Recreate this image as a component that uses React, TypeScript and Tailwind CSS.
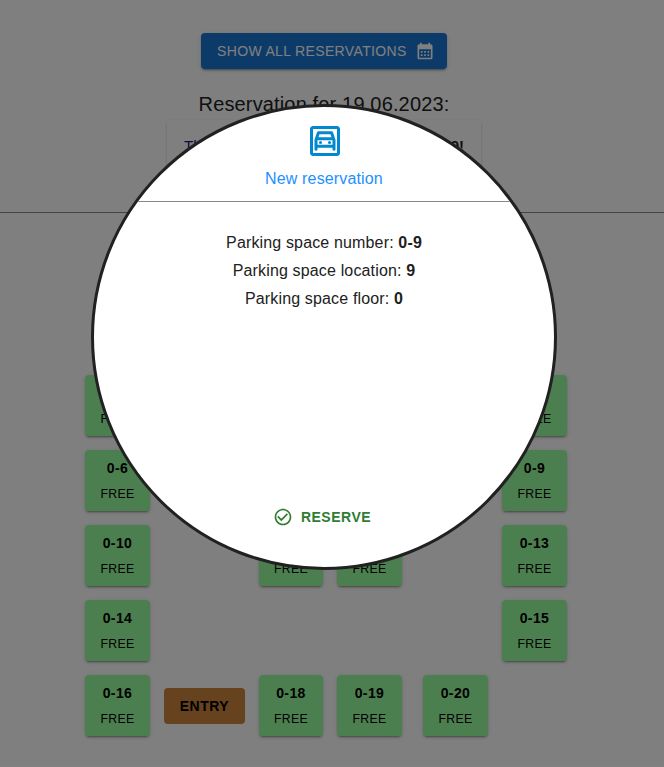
import React from "react";
import { MdOutlineGarage, MdCalendarMonth, MdCheckCircleOutline } from "react-icons/md";

const shadow =
  "shadow-[0_3px_1px_-2px_rgba(0,0,0,0.2),0_2px_2px_0_rgba(0,0,0,0.14),0_1px_5px_0_rgba(0,0,0,0.12)]";

function Space({ id, width = "w-[65px]" }: { id: string; width?: string }) {
  return (
    <button
      className={`${width} ${shadow} h-[61px] shrink-0 rounded-[4px] bg-[#98ff9e] text-[12.25px] leading-[25px] tracking-[0.3px] text-black`}
    >
      <b className="block text-[14px] tracking-[0.4px]">{id}</b>
      <span className="-mb-px block pt-px">FREE</span>
    </button>
  );
}

function Detail({ label, value }: { label: string; value: string }) {
  return (
    <p className="h-7 text-base leading-7 tracking-[0.15px] text-[#212121]">
      {label}: <b>{value}</b>
    </p>
  );
}

export default function App() {
  return (
    <div className="relative h-[767px] w-[664px] overflow-hidden bg-white font-['Liberation_Sans',Arial,sans-serif] text-[#212121]">
      <main className="flex flex-col">
        <header className="flex h-[213px] flex-col items-center border-b border-[#888] pt-[33px] pr-4">
          <button
            className={`${shadow} flex h-9 w-[246px] items-center rounded-[4px] bg-[#1976d2] pl-4 text-[14px] tracking-[0.35px] whitespace-nowrap text-white`}
          >
            SHOW ALL RESERVATIONS
            <MdCalendarMonth className="ml-2 size-5 shrink-0" />
          </button>
          <h1 className="mt-[19px] text-[20px] leading-8 tracking-[0.15px] whitespace-nowrap">
            Reservation for 19.06.2023:
          </h1>
          <div className="flex h-[70px] w-[314px] justify-between rounded-[4px] px-[17px] pt-[14px] text-[15px] leading-6 shadow-[0_1px_3px_rgba(0,0,0,0.2)]">
            <span className="text-[#1a1a80]">This</span>
            <b>9!</b>
          </div>
        </header>
        <section className="flex flex-col gap-[14px] pt-[162px] pl-[85px]">
          <div className="flex w-[482px] justify-between">
            <Space id="0-1" />
            <Space id="0-5" />
          </div>
          <div className="flex w-[482px] justify-between">
            <Space id="0-6" />
            <Space id="0-9" />
          </div>
          <div className="flex">
            <Space id="0-10" />
            <div className="ml-[109px] flex gap-[14px]">
              <Space id="0-11" width="w-[64px]" />
              <Space id="0-12" />
            </div>
            <div className="ml-[100px] flex">
              <Space id="0-13" />
            </div>
          </div>
          <div className="flex w-[482px] justify-between">
            <Space id="0-14" />
            <Space id="0-15" />
          </div>
          <div className="flex items-center">
            <Space id="0-16" />
            <button className="mx-[14px] h-9 w-[81px] rounded-[4px] bg-[#cd853f] pt-0.5 text-[14px] font-bold tracking-[0.5px] text-black">
              ENTRY
            </button>
            <Space id="0-18" width="w-[64px]" />
            <div className="ml-[14px] flex gap-[21px]">
              <Space id="0-19" />
              <Space id="0-20" />
            </div>
          </div>
        </section>
      </main>
      <div className="absolute inset-0 bg-black/50" />
      <div
        role="dialog"
        className="absolute top-[104px] left-[91px] flex size-[466px] flex-col items-center overflow-hidden rounded-full border-[3px] border-[#212121] bg-white"
      >
        <div className="flex h-[95px] w-full flex-col items-center border-b border-[#888] pt-4">
          <MdOutlineGarage className="ml-px size-9 text-[#0288d1]" />
          <h2 className="mt-2 text-base leading-6 tracking-[0.15px] text-[#1e90ff]">New reservation</h2>
        </div>
        <div className="mt-[27px] text-center">
          <Detail label="Parking space number" value="0-9" />
          <Detail label="Parking space location" value="9" />
          <Detail label="Parking space floor" value="0" />
        </div>
        <button className="mt-48 mr-[4px] flex h-6 items-center gap-2 text-[14px] font-bold tracking-[0.5px] text-[#2e7d32]">
          <MdCheckCircleOutline className="size-5" />
          RESERVE
        </button>
      </div>
    </div>
  );
}
